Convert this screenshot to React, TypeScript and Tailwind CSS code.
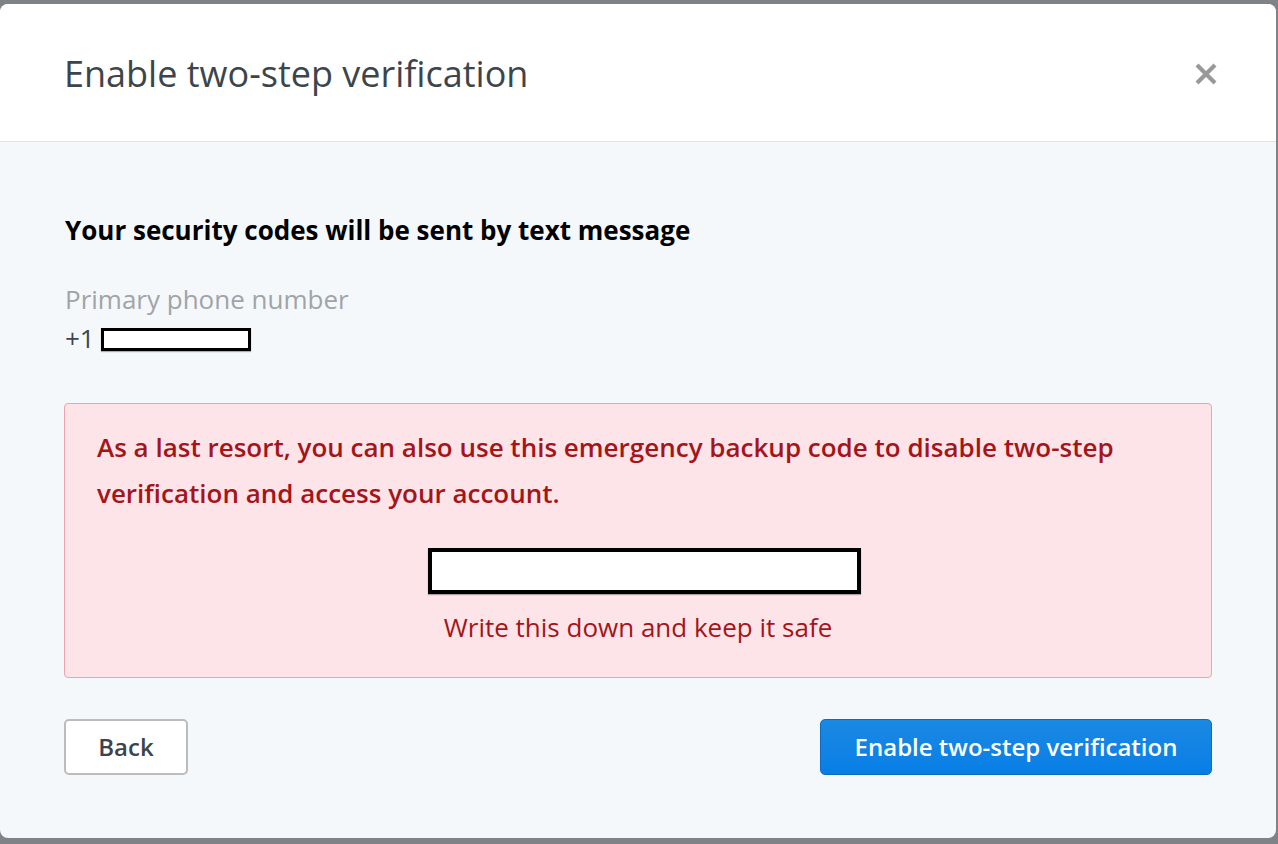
import React from "react";

export default function App() {
  return (
    <div
      className="w-[1278px] h-[844px] bg-[#7f8387] pt-[4px] pr-[2px] pb-[6px]"
      style={{ fontFamily: '"Open Sans", "Noto Sans", sans-serif' }}
    >
      <div className="h-full w-full rounded-[8px] overflow-hidden flex flex-col bg-[#f5f8fb]">
        <div className="h-[138px] shrink-0 bg-white border-b border-[#e2e5e8] flex items-center justify-between pl-[64px] pr-[58px]">
          <h1 className="text-[36px] leading-[44px] text-[#3d454c] font-normal pt-[2px]">
            Enable two-step verification
          </h1>
          <svg width="24" height="24" viewBox="0 0 24 24" className="mt-[2px]">
            <path d="M3 3 L21 21 M21 3 L3 21" stroke="#999999" strokeWidth="4.2" strokeLinecap="butt" />
          </svg>
        </div>
        <div className="flex-1 pt-[71px] px-[64px]">
          <p className="text-[26px] leading-[34px] font-bold text-black pl-[1px]">
            Your security codes will be sent by text message
          </p>
          <p className="mt-[35px] text-[26px] leading-[34px] text-[#a0a4a8] pl-[1px]">
            Primary phone number
          </p>
          <div className="flex items-center mt-[4px] pl-[1px] h-[36px]">
            <span className="text-[26px] leading-[34px] text-[#3d454c]">+1</span>
            <div className="ml-[6px] mt-[2px] w-[150px] h-[23px] border-[3px] border-black bg-white shadow-[0_1px_1px_rgba(0,0,0,0.3)]" />
          </div>
          <div className="mt-[47px] h-[275px] border border-[#eda3ad] rounded-[4px] bg-[#fce4e8] pt-[20px] px-[32px]">
            <p className="text-[26px] leading-[46px] font-semibold text-[#a51419]">
              As a last resort, you can also use this emergency backup code to disable two-step verification and access your account.
            </p>
            <div className="flex justify-center mt-[32px]">
              <div className="ml-[13px] w-[433px] h-[46px] border-[4px] border-black bg-white shadow-[0_1px_1px_rgba(0,0,0,0.3)]" />
            </div>
            <p className="text-center mt-[16px] text-[26px] leading-[34px] text-[#a51419]">
              Write this down and keep it safe
            </p>
          </div>
          <div className="mt-[41px] flex justify-between">
            <button className="w-[124px] h-[56px] rounded-[5px] border-2 border-[#bcbcbc] bg-white text-[24px] font-semibold text-[#3d454c]">
              Back
            </button>
            <button className="w-[392px] h-[56px] rounded-[5px] border border-[#0d6cc2] bg-gradient-to-b from-[#1a89e2] to-[#077ee6] text-[24px] font-semibold text-white">
              Enable two-step verification
            </button>
          </div>
        </div>
      </div>
    </div>
  );
}
